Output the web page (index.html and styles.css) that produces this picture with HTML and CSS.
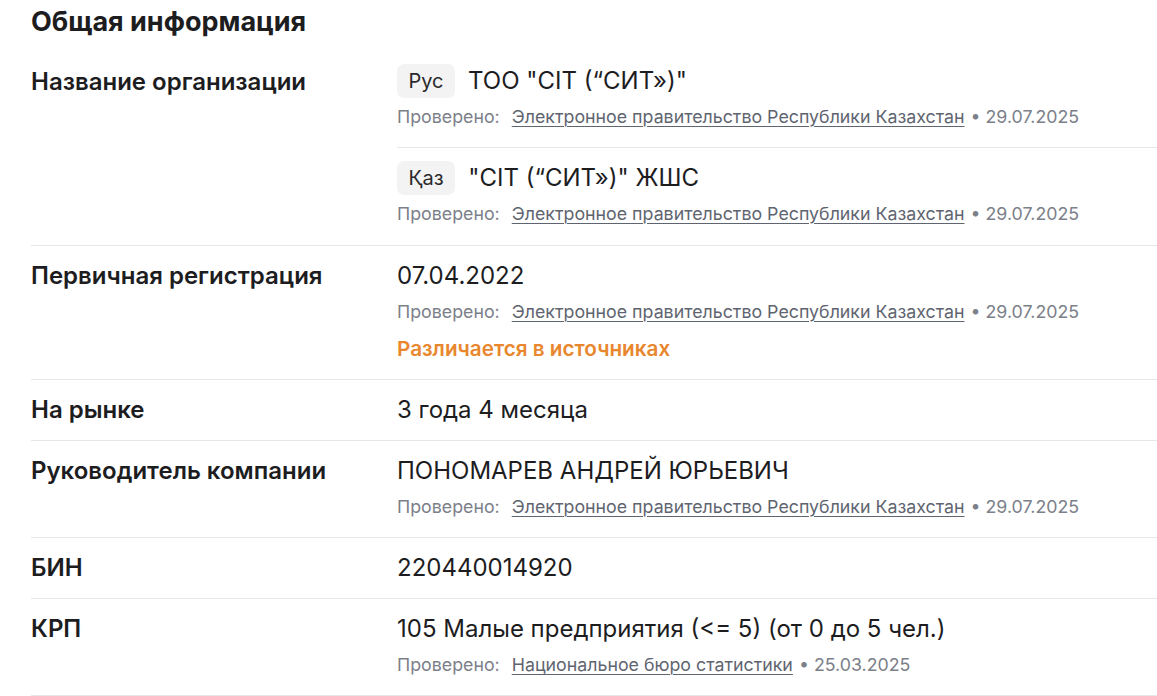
FILE: index.html
```html
<!DOCTYPE html>
<html lang="ru">
<head>
<meta charset="utf-8">
<link rel="stylesheet" href="styles.css">
</head>
<body>
<section class="info">
  <h2 class="info__title">Общая информация</h2>

  <div class="row">
    <div class="row__label">Название организации</div>
    <div class="row__value">
      <div class="sub">
        <div class="line"><span class="badge">Рус</span><span>ТОО "CIT (“СИТ»)"</span></div>
        <div class="meta"><span class="meta__k">Проверено:</span><a class="meta__link">Электронное правительство Республики Казахстан</a><span class="meta__date">• 29.07.2025</span></div>
      </div>
      <div class="sub">
        <div class="line"><span class="badge">Қаз</span><span>"CIT (“СИТ»)" ЖШС</span></div>
        <div class="meta"><span class="meta__k">Проверено:</span><a class="meta__link">Электронное правительство Республики Казахстан</a><span class="meta__date">• 29.07.2025</span></div>
      </div>
    </div>
  </div>

  <div class="row row--pad">
    <div class="row__label">Первичная регистрация</div>
    <div class="row__value">
      <div class="line">07.04.2022</div>
      <div class="meta"><span class="meta__k">Проверено:</span><a class="meta__link">Электронное правительство Республики Казахстан</a><span class="meta__date">• 29.07.2025</span></div>
      <div class="warn">Различается в источниках</div>
    </div>
  </div>

  <div class="row row--pad">
    <div class="row__label">На рынке</div>
    <div class="row__value">
      <div class="line">3 года 4 месяца</div>
    </div>
  </div>

  <div class="row row--pad">
    <div class="row__label">Руководитель компании</div>
    <div class="row__value">
      <div class="line">ПОНОМАРЕВ АНДРЕЙ ЮРЬЕВИЧ</div>
      <div class="meta"><span class="meta__k">Проверено:</span><a class="meta__link">Электронное правительство Республики Казахстан</a><span class="meta__date">• 29.07.2025</span></div>
    </div>
  </div>

  <div class="row row--pad">
    <div class="row__label">БИН</div>
    <div class="row__value">
      <div class="line">220440014920</div>
    </div>
  </div>

  <div class="row row--pad">
    <div class="row__label">КРП</div>
    <div class="row__value">
      <div class="line">105 Малые предприятия (&lt;= 5) (от 0 до 5 чел.)</div>
      <div class="meta"><span class="meta__k">Проверено:</span><a class="meta__link">Национальное бюро статистики</a><span class="meta__date">• 25.03.2025</span></div>
    </div>
  </div>
</section>
</body>
</html>
```

FILE: styles.css
```css
* { box-sizing: border-box; }

body {
  margin: 0;
  background: #ffffff;
  font-family: Inter, "Noto Sans", sans-serif;
  color: #1d1d1f;
}

.info {
  padding-left: 31px;
}

.info__title {
  margin: 0;
  padding-top: 6px;
  padding-bottom: 13px;
  font-size: 27px;
  line-height: 32px;
  font-weight: 700;
}

.row {
  display: grid;
  grid-template-columns: 366px 1fr;
  border-bottom: 1px solid #e6e6e6;
}

.row--pad {
  padding: 16px 0;
}

.row__label {
  font-size: 24px;
  line-height: 28px;
  font-weight: 600;
}

.row:first-of-type .row__label {
  padding-top: 17px;
}

.sub {
  padding: 16px 0;
}

.sub + .sub {
  border-top: 1px solid #e6e6e6;
  padding-bottom: 17px;
}

.line {
  display: flex;
  align-items: center;
  gap: 13px;
  height: 28px;
  font-size: 24px;
  line-height: 28px;
}

.badge {
  display: inline-flex;
  align-items: center;
  justify-content: center;
  height: 34px;
  padding: 0 11.5px;
  border-radius: 7px;
  background: #f3f3f4;
  font-size: 20px;
  color: #2a2a2c;
}

.meta {
  margin-top: 8px;
  display: flex;
  align-items: center;
  gap: 12px;
  font-size: 17.8px;
  line-height: 28px;
  color: #7b8089;
}

.meta__link {
  color: #5f6570;
  text-decoration: underline;
  text-underline-offset: 3px;
  text-decoration-thickness: 1px;
}

.meta__date {
  margin-left: -6px;
}

.warn {
  margin-top: 9px;
  font-size: 20.7px;
  line-height: 28px;
  font-weight: 600;
  color: #e8872d;
}
```
